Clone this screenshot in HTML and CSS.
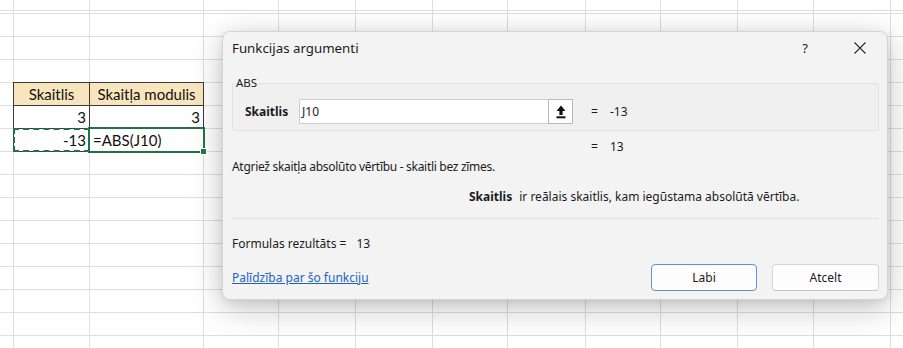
FILE: index.html
```html
<!DOCTYPE html>
<html lang="lv">
<head>
<meta charset="utf-8">
<title>Funkcijas argumenti</title>
<link rel="stylesheet" href="styles.css">
</head>
<body>
<div class="sheet">
  <div class="vl"></div><div class="vl"></div><div class="vl"></div><div class="vl"></div>
  <div class="vl"></div><div class="vl"></div><div class="vl"></div><div class="vl"></div>
  <div class="vl"></div><div class="vl"></div><div class="vl"></div><div class="vl"></div>
  <div class="data">
    <div class="cell hdr">Skaitlis</div>
    <div class="cell hdr">Skaitļa modulis</div>
    <div class="cell num">3</div>
    <div class="cell num">3</div>
    <div class="cell num copy">-13</div>
    <div class="cell sel">=ABS(J10)<span class="handle"></span></div>
  </div>
</div>

<div class="dialog">
  <div class="titlebar">
    <div class="title">Funkcijas argumenti</div>
    <div class="tbtn help">?</div>
    <div class="tbtn close">
      <svg width="12" height="12" viewBox="0 0 12 12"><path d="M0.5 0.5 L11.5 11.5 M11.5 0.5 L0.5 11.5" stroke="#2a2a2a" stroke-width="1.1" fill="none"/></svg>
    </div>
  </div>
  <fieldset class="group">
    <legend>ABS</legend>
    <div class="argrow">
      <div class="arglabel">Skaitlis</div>
      <div class="input">J10</div>
      <div class="refbtn">
        <svg width="10" height="14" viewBox="0 0 10 14"><path d="M5 0.5 L9.5 6 H6.6 V10 H3.4 V6 H0.5 Z" fill="#111"/><rect x="0.5" y="11.3" width="9" height="2" fill="#111"/></svg>
      </div>
      <div class="eq">=</div>
      <div class="val">-13</div>
    </div>
  </fieldset>
  <div class="resrow"><span class="eq">=</span><span class="val">13</span></div>
  <div class="desc">Atgriež skaitļa absolūto vērtību - skaitli bez zīmes.</div>
  <div class="argdesc"><b>Skaitlis</b><span>ir reālais skaitlis, kam iegūstama absolūtā vērtība.</span></div>
  <div class="sep"></div>
  <div class="formula"><span>Formulas rezultāts =</span><span class="fval">13</span></div>
  <div class="footer">
    <a class="link" href="#">Palīdzība par šo funkciju</a>
    <div class="btn primary">Labi</div>
    <div class="btn">Atcelt</div>
  </div>
</div>
</body>
</html>
```
FILE: styles.css
```css
html, body {
  margin: 0;
  padding: 0;
  width: 903px;
  height: 348px;
  overflow: hidden;
  background: #fff;
}

.sheet {
  display: grid;
  grid-template-columns: 14px 76px 114px 75px 77px 77px 75px 78px 75px 77px 76px 77px 1fr;
  grid-template-rows: 83px 23px 23px 23px 1fr;
  height: 348px;
  background-image: repeating-linear-gradient(to bottom, #dedede 0, #dedede 1px, transparent 1px, transparent 23px);
  background-position: 0 13px;
  font-family: Lato, "Liberation Sans", sans-serif;
  font-size: 15px;
  color: #111;
}

.vl {
  grid-row: 1 / -1;
  border-right: 1px solid #dedede;
  box-sizing: border-box;
}
.vl:nth-child(1) { grid-column: 1; }
.vl:nth-child(2) { grid-column: 2; }
.vl:nth-child(3) { grid-column: 3; }
.vl:nth-child(4) { grid-column: 4; }
.vl:nth-child(5) { grid-column: 5; }
.vl:nth-child(6) { grid-column: 6; }
.vl:nth-child(7) { grid-column: 7; }
.vl:nth-child(8) { grid-column: 8; }
.vl:nth-child(9) { grid-column: 9; }
.vl:nth-child(10) { grid-column: 10; }
.vl:nth-child(11) { grid-column: 11; }
.vl:nth-child(12) { grid-column: 12; }

.data {
  grid-column: 2 / 4;
  grid-row: 2 / 5;
  margin: -1px 0 0 -1px;
  display: grid;
  grid-template-columns: 76px 114px;
  grid-template-rows: 23px 23px 23px;
  border-left: 1px solid #3a3a3a;
  border-top: 1px solid #3a3a3a;
  background: #fff;
}

.cell {
  box-sizing: border-box;
  border-right: 1px solid #3a3a3a;
  border-bottom: 1px solid #3a3a3a;
  line-height: 22px;
  padding: 0 3px;
  white-space: nowrap;
  position: relative;
}
.hdr {
  background: #f9e5bd;
  text-align: center;
  padding: 0;
}
.num { text-align: right; }

.copy::after {
  content: "";
  position: absolute;
  left: -1px;
  top: -1px;
  right: -1px;
  bottom: -1px;
  border: 2px dashed #217346;
}
.sel::after {
  content: "";
  position: absolute;
  left: -2px;
  top: -2px;
  right: -2px;
  bottom: -2px;
  border: 2px solid #217346;
}
.handle {
  position: absolute;
  right: -4px;
  bottom: -4px;
  width: 5px;
  height: 5px;
  background: #217346;
  border: 1px solid #fff;
  z-index: 1;
}

.dialog {
  position: absolute;
  left: 222px;
  top: 31px;
  width: 666px;
  height: 269px;
  box-sizing: border-box;
  border: 1px solid #d4d4d4;
  border-radius: 8px;
  background: #f3f3f3;
  box-shadow: 0 8px 32px rgba(0, 0, 0, 0.24), 0 2px 8px rgba(0, 0, 0, 0.08);
  padding: 0 8px 0 9px;
  display: flex;
  flex-direction: column;
  font-family: "Noto Sans", "Open Sans", sans-serif;
  font-size: 12px;
  color: #1b1b1b;
}

.titlebar {
  height: 31px;
  display: flex;
  align-items: center;
}
.title {
  flex: 1;
  font-size: 13.3px;
  color: #1b1b1b;
}
.tbtn {
  width: 30px;
  height: 30px;
  display: flex;
  align-items: center;
  justify-content: center;
}
.help {
  font-size: 13px;
  margin-right: 25px;
}
.close {
  margin-right: 4px;
}

.group {
  margin: 13px 0 0 0;
  padding: 9px 10px 6px 12px;
  border: 1px solid #e2e2e2;
  border-radius: 2px;
  background: #f0f0f0;
}
.group legend {
  font-size: 11.5px;
  line-height: 14px;
  padding: 0 1px;
  margin-left: -10px;
  color: #1b1b1b;
}

.argrow {
  height: 25px;
  display: flex;
  align-items: center;
}
.arglabel {
  width: 54px;
  font-weight: bold;
}
.input {
  box-sizing: border-box;
  width: 249px;
  height: 25px;
  background: #fff;
  border: 1px solid #cfcfcf;
  border-right: none;
  line-height: 23px;
  padding-left: 2px;
}
.refbtn {
  box-sizing: border-box;
  width: 25px;
  height: 25px;
  background: #fff;
  border: 1px solid #b9b9b9;
  display: flex;
  align-items: center;
  justify-content: center;
}
.argrow .eq {
  margin-left: 18px;
  width: 19px;
}

.resrow {
  margin-top: 8px;
  height: 15px;
  line-height: 15px;
  padding-left: 359px;
  display: flex;
}
.resrow .eq { width: 19px; }

.desc {
  margin-top: 5px;
  line-height: 15px;
  letter-spacing: -0.3px;
}
.argdesc {
  margin-top: 15px;
  line-height: 15px;
  padding-left: 237px;
}
.argdesc span { margin-left: 7px; }

.sep {
  margin-top: 14px;
  height: 1px;
  background: #e1e1e1;
}

.formula {
  margin-top: 17px;
  line-height: 15px;
}
.fval { margin-left: 10px; }

.footer {
  margin-top: 13px;
  height: 27px;
  display: flex;
  align-items: center;
}
.link {
  flex: 1;
  color: #1c64c4;
  text-decoration: underline;
}
.btn {
  box-sizing: border-box;
  width: 107px;
  height: 27px;
  line-height: 25px;
  text-align: center;
  background: #fdfdfd;
  border: 1px solid #d6d6d6;
  border-bottom-color: #c4c4c4;
  border-radius: 4px;
  font-size: 12px;
}
.btn.primary {
  width: 106px;
  margin-right: 15px;
  border: 1px solid #5b95d0;
}
```
